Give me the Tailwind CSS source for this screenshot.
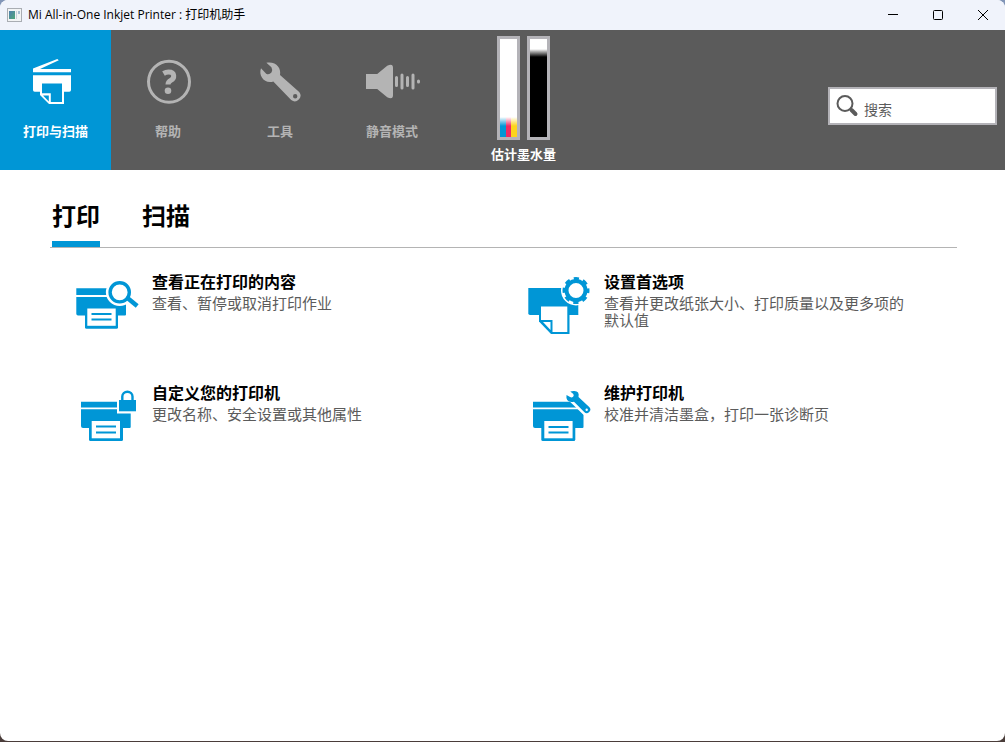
<!DOCTYPE html>
<html lang="zh-CN">
  <head>
    <meta charset="UTF-8" />
    <meta name="viewport" content="width=device-width, initial-scale=1.0"/>
    <title>Mi All-in-One Inkjet Printer : 打印机助手</title>
    <script src="https://cdn.jsdelivr.net/npm/@tailwindcss/browser@4"></script>
  </head>
  <body class="min-h-screen flex flex-col pb-px bg-linear-to-b from-[#8296b8] to-[#4a3d3a] font-['Open_Sans','Noto_Sans_CJK_SC',sans-serif]">
    <div class="grow flex flex-col bg-white rounded-lg overflow-hidden">

      <!-- Title bar -->
      <div class="h-[30px] flex items-center bg-[#f0f3fb] text-black">
        <svg class="ml-[7px] mr-[6px]" width="15" height="14" viewBox="0 0 15 14" aria-hidden="true">
          <defs>
            <linearGradient id="app" x1="0" y1="0" x2="1" y2="1">
              <stop offset="0" stop-color="#4f7fb0"/>
              <stop offset="1" stop-color="#4fa878"/>
            </linearGradient>
          </defs>
          <rect x=".5" y=".5" width="14" height="13" fill="#f2f4f5" stroke="#a9adb3"/>
          <rect x="2" y="3" width="6" height="8" fill="url(#app)"/>
          <rect x="9" y="3" width="1" height="8" fill="#c9d2da"/>
          <rect x="11" y="3" width="2" height="3" fill="#a5bfd2"/>
        </svg>
        <h1 class="text-[12px] leading-4">Mi All-in-One Inkjet Printer : 打印机助手</h1>
        <div class="ml-auto flex h-full">
          <button class="w-[45px] flex items-center justify-center" aria-label="最小化">
            <svg width="10" height="10" viewBox="0 0 10 10" stroke="#000"><path d="M0 4.500h10"/></svg>
          </button>
          <button class="w-[45px] flex items-center justify-center" aria-label="最大化">
            <svg width="10" height="10" viewBox="0 0 10 10" fill="none" stroke="#000"><rect x=".5" y=".5" width="9" height="9" rx="1"/></svg>
          </button>
          <button class="w-[45px] flex items-center justify-center" aria-label="关闭">
            <svg width="10" height="10" viewBox="0 0 10 10" stroke="#000"><path d="M0 0l10 10M10 0L0 10"/></svg>
          </button>
        </div>
      </div>

      <!-- Toolbar -->
      <header class="h-[140px] flex items-start bg-[#5b5b5b] text-[#b4b4b4]">
        <nav class="flex h-full text-[13px] leading-5 font-bold">
          <button class="w-28 flex flex-col items-center pt-[26px] gap-[13px] border-r border-[#5b5b5b] bg-[#0096d6] text-white">
            <svg width="64" height="52" viewBox="24 56 64 52" fill="#fff" aria-hidden="true">
              <path d="M33 68.500L57.300 59l1.500 1.200L40 69h31v3.300H33z"/>
              <path d="M33 75.300h38V90q0 1.700-1.700 1.700H34.700q-1.700 0-1.700-1.700z"/>
              <path d="M40 82h24v22H49l-9-9z"/>
              <path d="M42 83.500h20V102H50.800v-8.800H42z" fill="#0096d6"/>
              <path d="M43 95.500h5.800v6z" fill="#0096d6"/>
            </svg>
            打印与扫描
          </button>
          <button class="w-28 flex flex-col items-center pt-[26px] gap-[13px]">
            <svg width="64" height="52" viewBox="136 56 64 52" aria-hidden="true">
              <circle cx="169" cy="81.700" r="20.500" fill="none" stroke="currentColor" stroke-width="3"/>
              <path d="M163.500 73.500q2.500-1.500 5-1.500c7 0 6 6.500 2.500 8.200q-3 1.500-3 4.300" fill="none" stroke="currentColor" stroke-width="5"/>
              <circle cx="168" cy="90.700" r="3.300" fill="currentColor"/>
            </svg>
            帮助
          </button>
          <button class="w-28 flex flex-col items-center pt-[26px] gap-[13px]">
            <svg width="64" height="52" viewBox="248 56 64 52" fill="currentColor" fill-rule="evenodd" aria-hidden="true">
              <path d="M261 68.300C258.500 75 263 82 270 82q1.800 0 3.300-.5L291.200 100a5.700 5.700 0 0 0 8-8L280 75c1.500-7-4-14-13.600-12.300l5 4.500q1.600 3 .2 5-2.500 3-5.400 1.500zM295.200 94a2.200 2.200 0 1 1 0 4.400a2.200 2.200 0 1 1 0-4.400z"/>
            </svg>
            工具
          </button>
          <button class="w-28 flex flex-col items-center pt-[26px] gap-[13px]">
            <svg width="64" height="52" viewBox="360 56 64 52" fill="currentColor" aria-hidden="true">
              <path d="M366 74h11.200l10-8.300q5.800-2.700 5.800 2v27.600q0 4.700-5.800 2L377.200 89H366z"/>
              <path d="M396.500 77.500v8M402 75v13M407.500 77.500v8M413 75v13M418.500 81v1" fill="none" stroke="currentColor" stroke-width="3" stroke-linecap="round"/>
            </svg>
            静音模式
          </button>
        </nav>

        <!-- Ink levels -->
        <div class="ml-[43px] pt-[6px] flex flex-col items-center">
          <div class="flex gap-[7px]">
            <div class="relative w-[23px] h-[104px] flex items-end border-3 border-[#b4b3b8] bg-white">
              <div class="grow h-5 bg-[#0096d6]"></div>
              <div class="grow h-5 bg-[#ee2a63]"></div>
              <div class="grow h-5 bg-[#fdd41a]"></div>
              <div class="absolute inset-x-0 bottom-[11px] h-[9px] bg-linear-to-t from-white/0 to-white"></div>
            </div>
            <div class="w-[23px] h-[104px] flex flex-col border-3 border-[#b4b3b8] bg-white">
              <div class="mt-[10px] h-2 bg-linear-to-b/srgb from-white to-black"></div>
              <div class="grow bg-black"></div>
            </div>
          </div>
          <span class="mt-1 text-[13px] leading-5 font-bold text-white">估计墨水量</span>
        </div>

        <label class="ml-auto mr-2 mt-[57px] w-[169px] h-[38px] flex items-center border-2 border-[#b4b3b8] bg-white text-[#5b5b5b]">
          <svg class="shrink-0 ml-[6px]" width="24" height="24" viewBox="836 94 24 24" fill="none" stroke="currentColor" aria-hidden="true">
            <circle cx="845" cy="103.500" r="7.500" stroke-width="2"/>
            <path d="M850.500 109l1.500 1.500" stroke-width="2.500"/>
            <path d="M851.500 110l4 4" stroke-width="4" stroke-linecap="round"/>
          </svg>
          <input type="text" aria-label="搜索" placeholder="搜索" class="min-w-0 grow ml-1 pt-2 text-[14px] leading-5 outline-none placeholder:text-[#5b5b5b]">
        </label>
      </header>

      <main class="grow pl-[50px] pr-12">
        <nav class="flex gap-[42px] pt-[30px] pl-[2px] border-b border-[#b4b4b4] text-[24px] leading-8 font-bold text-black">
          <button class="pb-[9px] border-b-6 border-[#0096d6]">打印</button>
          <button class="pb-[9px] border-b-6 border-transparent">扫描</button>
        </nav>

        <div class="grid grid-cols-2 gap-y-[47px] mt-6 mr-[3px] text-left">
          <a href="#" class="flex pl-[22px] pr-12 gap-[10px]">
            <svg class="shrink-0 mt-1" width="70" height="60" viewBox="72 276 70 60" fill="#0096d6" aria-hidden="true">
              <path d="M76.300 288.300H126V295H76.300zM76.300 297H126v17.500q0 1-1 1H78q-1.700 0-1.700-1.700z"/>
              <path d="M85 308h33v19.200q0 1.500-1.500 1.500h-30q-1.500 0-1.500-1.500z"/>
              <path d="M87.300 308.500h28.400v17.300H87.300z" fill="#fff"/>
              <path d="M91.500 313h20v2h-20zM91.500 318.500h20v2h-20z"/>
              <circle cx="119.700" cy="292.300" r="13.800" fill="#fff"/>
              <path d="M128 298l9 7.500" stroke="#fff" stroke-width="8"/>
              <circle cx="119.700" cy="292.300" r="9.600" fill="#fff" stroke="#0096d6" stroke-width="3.400"/>
              <path d="M127.500 298l9.700 8" stroke="#0096d6" stroke-width="4.500"/>
            </svg>
            <span>
              <strong class="block text-[16px] leading-5 text-black">查看正在打印的内容</strong>
              <span class="block mt-[3px] text-[15px] leading-[17px] text-[#5b5b5b]">查看、暂停或取消打印作业</span>
            </span>
          </a>
          <a href="#" class="flex pl-[22px] pr-12 gap-[10px]">
            <svg class="shrink-0 mt-1" width="70" height="60" viewBox="524 276 70 60" fill="#0096d6" aria-hidden="true">
              <path d="M528.300 288H578.300v27h-48.300q-1.700 0-1.700-1.700z"/>
              <path d="M539 304.500h30.500v29.500h-18.500l-12-12.500z"/>
              <path d="M541 306.500h26.300v25.500h-14.800V320H541z" fill="#fff"/>
              <path d="M543 322h7.500v8z" fill="#fff"/>
              <circle cx="576" cy="290.500" r="15" fill="#fff"/>
              <circle cx="576" cy="290.500" r="9.500" fill="none" stroke="#0096d6" stroke-width="4"/>
              <circle cx="576" cy="290.500" r="12" fill="none" stroke="#0096d6" stroke-width="3" stroke-dasharray="5.200 4.225" stroke-dashoffset="2.600"/>
            </svg>
            <span>
              <strong class="block text-[16px] leading-5 text-black">设置首选项</strong>
              <span class="block mt-[3px] text-[15px] leading-[17px] text-[#5b5b5b]">查看并更改纸张大小、打印质量以及更多项的默认值</span>
            </span>
          </a>
          <a href="#" class="flex pl-[22px] pr-12 gap-[10px]">
            <svg class="shrink-0 mt-1" width="70" height="60" viewBox="72 387 70 60" fill="#0096d6" aria-hidden="true">
              <path d="M81 401.700h36v5.800H81zM81 409.300h49.700V427q0 1-1 1H83q-2 0-2-2z"/>
              <path d="M89 421h34v18.500q0 1.500-1.500 1.500h-31q-1.500 0-1.500-1.500z"/>
              <path d="M91.700 421h28.300v17.300H91.700z" fill="#fff"/>
              <path d="M96 425.500h20v2H96zM96 431.500h20v2H96z"/>
              <path d="M117 398h21v15.500h-21z" fill="#fff"/>
              <path d="M119 400h17v11.300h-17z"/>
              <path d="M122.300 401v-4.500a5 4.700 0 0 1 10.200 0v4.500" fill="none" stroke="#0096d6" stroke-width="2.400"/>
            </svg>
            <span>
              <strong class="block text-[16px] leading-5 text-black">自定义您的打印机</strong>
              <span class="block mt-[3px] text-[15px] leading-[17px] text-[#5b5b5b]">更改名称、安全设置或其他属性</span>
            </span>
          </a>
          <a href="#" class="flex pl-[22px] pr-12 gap-[10px]">
            <svg class="shrink-0 mt-1" width="70" height="60" viewBox="524 387 70 60" fill="#0096d6" aria-hidden="true">
              <path d="M533 401.700h50v5.800h-50zM533 409.300h50.500V427q0 1-1 1H535q-2 0-2-2z"/>
              <path d="M541.300 421h34v18.500q0 1.500-1.500 1.500h-31q-1.500 0-1.500-1.500z"/>
              <path d="M544.300 421h28.300v17.300h-28.300z" fill="#fff"/>
              <path d="M548.500 426h20v2h-20zM548.500 431.500h20v2h-20z"/>
              <path d="M572 396l15 14.500" stroke="#fff" stroke-width="11" stroke-linecap="round"/>
              <path fill-rule="evenodd" d="M566.500 395q-1 6.500 5 7 1.500 0 2.500-.3l10.200 10.200a3.300 3.300 0 0 0 5-5L578.500 397q1.300-6.500-5-6-1.500 0-3.200.5l3 2.600q1 1.500-.2 2.700-1.400 1.300-3 .3zM586.700 408.500a1.200 1.200 0 1 1 0 2.400a1.200 1.200 0 1 1 0-2.400z"/>
            </svg>
            <span>
              <strong class="block text-[16px] leading-5 text-black">维护打印机</strong>
              <span class="block mt-[3px] text-[15px] leading-[17px] text-[#5b5b5b]">校准并清洁墨盒，打印一张诊断页</span>
            </span>
          </a>
        </div>
      </main>
    </div>
  </body>
</html>
